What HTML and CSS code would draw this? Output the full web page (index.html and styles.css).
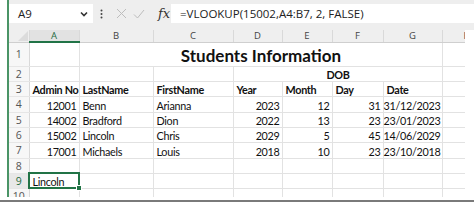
FILE: index.html
```html
<!DOCTYPE html>
<html lang="en">
<head>
  <meta charset="UTF-8" />
  <title>Students Information</title>
  <link rel="stylesheet" href="styles.css">
</head>
<body>
  <div class="window">
    <div class="app">
      <div class="fbar">
        <div class="namebox">
          <span>A9</span>
          <svg class="chev" width="8" height="6" viewBox="0 0 8 6"><path d="M1 1.5 L4 4.5 L7 1.5" fill="none" stroke="#333" stroke-width="1.6"/></svg>
        </div>
        <div class="fbar-tools">
          <svg class="dots" width="3" height="10" viewBox="0 0 3 10"><circle cx="1.5" cy="1.5" r="1" fill="#444"/><circle cx="1.5" cy="5" r="1" fill="#444"/><circle cx="1.5" cy="8.5" r="1" fill="#444"/></svg>
          <svg class="cancel" width="11" height="11" viewBox="0 0 11 11"><path d="M1 1 L10 10 M10 1 L1 10" stroke="#bdbdbd" stroke-width="1"/></svg>
          <svg class="enter" width="12" height="10" viewBox="0 0 12 10"><path d="M1 5.5 L4.5 9 L11 1" fill="none" stroke="#bdbdbd" stroke-width="1"/></svg>
          <span class="fx">fx</span>
        </div>
        <div class="formula">=VLOOKUP(15002,A4:B7, 2, FALSE)</div>
      </div>

      <div class="grid-wrap">
        <table class="sheet">
          <colgroup>
            <col class="w-rh"><col class="w-a"><col class="w-b"><col class="w-c"><col class="w-d">
            <col class="w-e"><col class="w-f"><col class="w-g"><col class="w-h">
          </colgroup>
          <thead>
            <tr>
              <th class="corner"><svg width="10" height="10" viewBox="0 0 10 10"><path d="M10 0 L10 10 L0 10 Z" fill="#dcdcdc"/></svg></th>
              <th class="sel">A</th><th>B</th><th>C</th><th>D</th><th>E</th><th>F</th><th>G</th><th>H</th>
            </tr>
          </thead>
          <tbody>
            <tr class="r-tall">
              <th>1</th><td></td><td colspan="6" class="title">Students Information</td><td></td>
            </tr>
            <tr>
              <th>2</th><td></td><td></td><td></td><td colspan="4" class="b center">DOB</td><td></td>
            </tr>
            <tr>
              <th>3</th><td class="b">Admin No</td><td class="b">LastName</td><td class="b">FirstName</td>
              <td class="b">Year</td><td class="b">Month</td><td class="b">Day</td><td class="b">Date</td><td></td>
            </tr>
            <tr class="r16">
              <th>4</th><td class="num">12001</td><td>Benn</td><td>Arianna</td>
              <td class="num">2023</td><td class="num">12</td><td class="num">31</td><td class="num">31/12/2023</td><td></td>
            </tr>
            <tr>
              <th>5</th><td class="num">14002</td><td>Bradford</td><td>Dion</td>
              <td class="num">2022</td><td class="num">13</td><td class="num">23</td><td class="num">23/01/2023</td><td></td>
            </tr>
            <tr>
              <th>6</th><td class="num">15002</td><td>Lincoln</td><td>Chris</td>
              <td class="num">2029</td><td class="num">5</td><td class="num">45</td><td class="num">14/06/2029</td><td></td>
            </tr>
            <tr class="r16">
              <th>7</th><td class="num">17001</td><td>Michaels</td><td>Louis</td>
              <td class="num">2018</td><td class="num">10</td><td class="num">23</td><td class="num">23/10/2018</td><td></td>
            </tr>
            <tr>
              <th>8</th><td></td><td></td><td></td><td></td><td></td><td></td><td></td><td></td>
            </tr>
            <tr>
              <th class="sel-row">9</th><td class="active">Lincoln</td><td></td><td></td><td></td><td></td><td></td><td></td><td></td>
            </tr>
            <tr>
              <th>10</th><td></td><td></td><td></td><td></td><td></td><td></td><td></td><td></td>
            </tr>
          </tbody>
        </table>
      </div>
    </div>
    <div class="bottom-rule"></div>
  </div>
</body>
</html>
```

FILE: styles.css
```css
* {
  box-sizing: border-box;
}

body {
  margin: 0;
  background: #fff;
}

.window {
  width: 474px;
  height: 207px;
  overflow: hidden;
  background: #fff;
}

.app {
  margin-left: 7px;
  border-left: 2px solid #4a9466;
  height: 197px;
  display: flex;
  flex-direction: column;
}

/* formula bar */
.fbar {
  display: flex;
  flex: none;
  height: 30px;
  padding: 4px 0 7px;
  background: #eeeeee;
  font-family: "Open Sans", "Noto Sans", sans-serif;
  font-size: 11.5px;
  color: #222;
}

.namebox {
  width: 84px;
  background: #fff;
  display: flex;
  align-items: center;
  justify-content: space-between;
  padding: 0 5px 0 9px;
}

.fbar-tools {
  width: 78px;
  display: flex;
  align-items: center;
  padding-left: 7px;
}

.cancel {
  margin-left: 13px;
}

.enter {
  margin-left: 6px;
}

.fx {
  margin-left: 13px;
  font-family: "DejaVu Serif", "Liberation Serif", serif;
  font-style: italic;
  font-size: 13px;
  color: #333;
}

.formula {
  flex: 1;
  background: #fff;
  display: flex;
  align-items: center;
  padding-left: 9px;
}

/* sheet */
.grid-wrap {
  flex: 1;
  width: 456px;
  overflow: hidden;
}

.sheet {
  border-collapse: collapse;
  table-layout: fixed;
  width: 483px;
  font-family: "Lato", "Liberation Sans", sans-serif;
  font-size: 10.8px;
  letter-spacing: -0.3px;
  color: #111;
}

.w-rh { width: 20px; }
.w-a { width: 50px; }
.w-b { width: 74px; }
.w-c { width: 80px; }
.w-d { width: 49px; }
.w-e { width: 50px; }
.w-f { width: 51px; }
.w-g { width: 59px; }
.w-h { width: 50px; }

.sheet thead th {
  height: 12px;
  padding: 0;
  background: #efefef;
  border-right: 1px solid #d9d9d9;
  border-bottom: 1px solid #cfcfcf;
  font-family: "Open Sans", "Noto Sans", sans-serif;
  font-weight: normal;
  font-size: 9.5px;
  letter-spacing: 0;
  line-height: 10px;
  color: #444;
  overflow: hidden;
}

.sheet thead th.corner {
  text-align: right;
  vertical-align: bottom;
  padding: 0 1px 1px 0;
  line-height: 0;
}

.sheet thead th.sel {
  background: #e2e2e2;
  color: #1e6b3f;
  border-bottom: 2px solid #217346;
}

.sheet tbody th {
  padding: 0;
  background: #f7f7f7;
  border-right: 1px solid #d9d9d9;
  border-bottom: 1px solid #e6e6e6;
  font-family: "Open Sans", "Noto Sans", sans-serif;
  font-weight: normal;
  font-size: 10.5px;
  letter-spacing: 0;
  color: #555;
  text-align: center;
}

.sheet tbody th.sel-row {
  color: #1e6b3f;
  background: #e8e8e8;
}

.sheet tbody tr {
  height: 15px;
}

.sheet tbody tr.r16 {
  height: 16px;
}

.sheet tbody tr.r-tall {
  height: 24px;
}

.sheet td {
  padding: 0 2px 0 3px;
  border-right: 1px solid #e2e2e2;
  border-bottom: 1px solid #e2e2e2;
  white-space: nowrap;
  line-height: 13px;
  vertical-align: bottom;
}

.sheet td.b {
  font-weight: bold;
}

.sheet td.num {
  text-align: right;
  padding: 0 2px 0 0;
}

.sheet td.center {
  text-align: center;
}

.sheet td.title {
  text-align: center;
  font-weight: bold;
  font-size: 17px;
  letter-spacing: 0;
  line-height: 20px;
}

.sheet td.active {
  position: relative;
  outline: 2px solid #217346;
  outline-offset: -1px;
}

.sheet td.active::after {
  content: "";
  position: absolute;
  right: -3px;
  bottom: -3px;
  width: 4px;
  height: 4px;
  background: #217346;
  border: 1px solid #fff;
}

.bottom-rule {
  margin-top: 3px;
  height: 2px;
  background: #7a7a7a;
}
```
